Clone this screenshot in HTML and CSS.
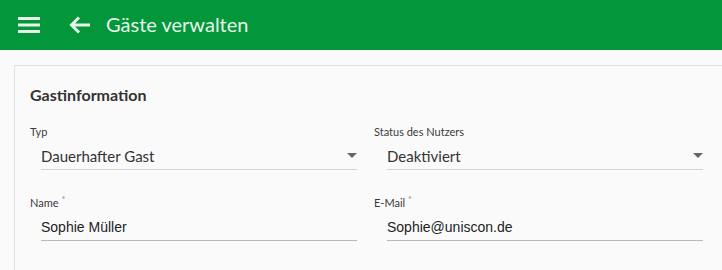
FILE: index.html
```html
<!DOCTYPE html>
<html lang="de">
<head>
  <meta charset="UTF-8" />
  <meta name="viewport" content="width=device-width, initial-scale=1.0" />
  <title>Gäste verwalten</title>
  <link rel="stylesheet" href="styles.css">
</head>
<body>
  <!-- Toolbar -->
  <header class="toolbar">
    <button class="icon-btn menu-btn" aria-label="Menü">
      <svg width="22" height="16" viewBox="0 0 22 16">
        <rect x="0" y="0" width="22" height="3" fill="currentColor" />
        <rect x="0" y="6.5" width="22" height="3" fill="currentColor" />
        <rect x="0" y="13" width="22" height="3" fill="currentColor" />
      </svg>
    </button>
    <button class="icon-btn back-btn" aria-label="Zurück">
      <svg width="22" height="18" viewBox="0 0 22 18">
        <path d="M21 9H3M10 1.5L2.5 9l7.5 7.5" fill="none" stroke="currentColor" stroke-width="3" />
      </svg>
    </button>
    <h1 class="toolbar-title">Gäste verwalten</h1>
  </header>

  <main class="page">
    <section class="card">
      <h2 class="card-title">Gastinformation</h2>

      <div class="form-grid">
        <div class="form-group">
          <label class="field-label">Typ</label>
          <div class="field select-field">
            <span class="field-value">Dauerhafter Gast</span>
            <span class="caret"></span>
          </div>
        </div>
        <div class="form-group">
          <label class="field-label">Status des Nutzers</label>
          <div class="field select-field">
            <span class="field-value">Deaktiviert</span>
            <span class="caret"></span>
          </div>
        </div>
        <div class="form-group">
          <label class="field-label">Name <sup class="req">*</sup></label>
          <div class="field input-field">
            <input type="text" value="Sophie Müller" />
          </div>
        </div>
        <div class="form-group">
          <label class="field-label">E-Mail <sup class="req">*</sup></label>
          <div class="field input-field">
            <input type="email" value="Sophie@uniscon.de" />
          </div>
        </div>
      </div>
    </section>
  </main>
</body>
</html>
```

FILE: styles.css
```css
/* General Styling */
html,
body {
  margin: 0;
  padding: 0;
  height: 100%;
  overflow: hidden;
  background: #fafafa;
  font-family: Lato, "Open Sans", sans-serif;
  color: #333;
}

/* Toolbar */
.toolbar {
  height: 50px;
  background-color: #03963a;
  color: #e6f4e9;
  display: flex;
  align-items: center;
}

.icon-btn {
  background: none;
  border: none;
  padding: 0;
  color: inherit;
  display: flex;
  cursor: pointer;
}

.menu-btn {
  margin-left: 18px;
}

.back-btn {
  margin-left: 29px;
}

.toolbar-title {
  margin: 0 0 0 15px;
  font-size: 20px;
  font-weight: 400;
  padding-bottom: 2px;
}

/* Card */
.page {
  padding: 15px 0 0 14px;
}

.card {
  box-sizing: border-box;
  height: 205px;
  border-top: 1px solid #e2e2e2;
  border-left: 1px solid #e2e2e2;
  padding: 18px 0 0 15px;
}

.card-title {
  margin: 0;
  font-size: 16px;
  font-weight: 700;
  line-height: 22px;
  color: #333;
}

/* Form */
.form-grid {
  display: grid;
  grid-template-columns: 329px 329px;
  column-gap: 15px;
  row-gap: 26px;
  margin-top: 19px;
}

.form-group {
  display: flex;
  flex-direction: column;
}

.field-label {
  font-size: 11px;
  line-height: 14px;
  color: #3a3a3a;
}

.req {
  font-size: 9px;
  color: #888;
  vertical-align: 4px;
  line-height: 0;
}

.field {
  width: 316px;
  margin-left: 11px;
  height: 27px;
  display: flex;
  align-items: center;
  border-bottom: 1px solid #d4d4d4;
  margin-top: 3px;
}

.input-field {
  border-bottom-color: #b8b8b8;
}

.form-group:nth-child(even) .field {
  margin-left: 13px;
}

.field-value {
  flex: 1;
  font-size: 15px;
  color: #333;
}

.caret {
  width: 0;
  height: 0;
  border-left: 5px solid transparent;
  border-right: 5px solid transparent;
  border-top: 5px solid #666;
}

input {
  width: 100%;
  border: none;
  background: transparent;
  padding: 0;
  font-family: "Liberation Sans", Arial, sans-serif;
  font-size: 14px;
  color: #222;
  outline: none;
}
```
